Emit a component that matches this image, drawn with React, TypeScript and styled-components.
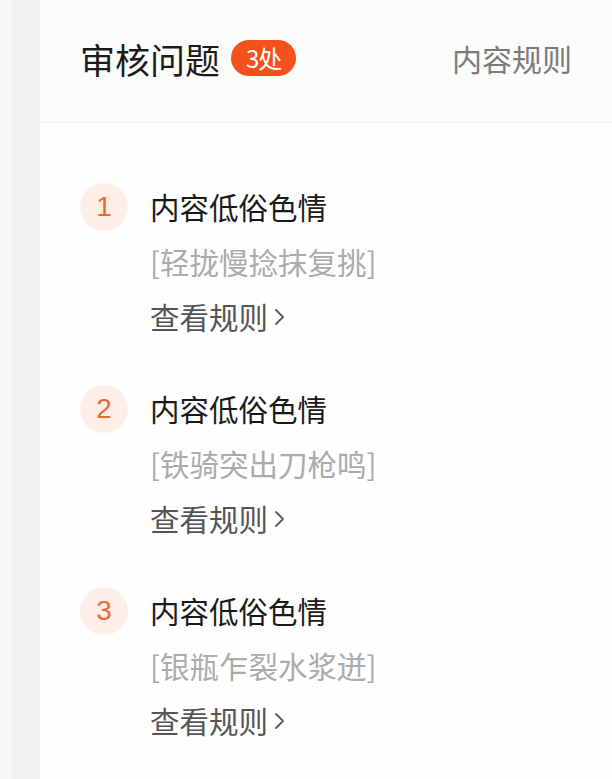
import React from "react";
import styled, { createGlobalStyle } from "styled-components";

const Global = createGlobalStyle`
  html, body { margin: 0; padding: 0; background: #f3f3f3; }
  body { font-family: "Noto Sans CJK SC", "Noto Sans", sans-serif; }
`;

const Page = styled.div`
  display: flex;
  min-height: 779px;
  width: 612px;
  background: #f3f3f3;
`;

const LeftStrip = styled.div`
  width: 40px;
  flex-shrink: 0;
  background: linear-gradient(90deg, #f7f7f7 0, #f7f7f7 12px, #f1f1f1 12px, #f2f2f2 100%);
`;

const Panel = styled.div`
  flex: 1;
  background: #fefefe;
  display: flex;
  flex-direction: column;
`;

const Header = styled.div`
  height: 123px;
  box-sizing: border-box;
  background: #fbfbfa;
  border-bottom: 1px solid #f1f1f0;
  display: flex;
  align-items: center;
  justify-content: space-between;
  padding: 0 40px 6px 40px;
`;

const TitleGroup = styled.div`
  display: flex;
  align-items: center;
  gap: 11px;
`;

const Title = styled.div`
  font-size: 35px;
  color: #1b1b1b;
  line-height: 1;
`;

const Badge = styled.div`
  height: 36px;
  padding: 0 15px;
  border-radius: 18px;
  background: #f4511c;
  color: #fff;
  font-size: 24px;
  letter-spacing: -1px;
  display: flex;
  align-items: center;
  justify-content: center;
  line-height: 1;
`;

const RulesLink = styled.div`
  font-size: 30px;
  color: #7a7a7a;
  line-height: 1;
`;

const List = styled.div`
  display: flex;
  flex-direction: column;
  gap: 37px;
  padding: 56px 0 0 40px;
`;

const Item = styled.div`
  display: flex;
  align-items: flex-start;
  gap: 22px;
`;

const NumCircle = styled.div`
  width: 48px;
  height: 48px;
  margin-top: 4px;
  border-radius: 50%;
  background: #fdefe8;
  color: #ec6a33;
  font-family: "Liberation Sans", Arial, sans-serif;
  font-size: 28px;
  display: flex;
  align-items: center;
  justify-content: center;
  flex-shrink: 0;
`;

const Lines = styled.div`
  display: flex;
  flex-direction: column;
`;

const Line = styled.div<{ $tone: "title" | "quote" | "link" }>`
  font-size: 29.5px;
  line-height: 55px;
  color: ${(p) => (p.$tone === "title" ? "#1a1a1a" : p.$tone === "quote" ? "#ababab" : "#555555")};
  display: flex;
  align-items: center;
  gap: 6px;
  white-space: nowrap;
`;

const Chevron = () => (
  <svg width="11" height="18" viewBox="0 0 11 18" fill="none">
    <path d="M2 2 L9 9 L2 16" stroke="#5a5a5a" strokeWidth="1.8" strokeLinecap="round" strokeLinejoin="round" />
  </svg>
);

const items = [
  { n: 1, quote: "[轻拢慢捻抹复挑]" },
  { n: 2, quote: "[铁骑突出刀枪鸣]" },
  { n: 3, quote: "[银瓶乍裂水浆迸]" },
];

export default function App() {
  return (
    <>
      <Global />
      <Page>
        <LeftStrip />
        <Panel>
          <Header>
            <TitleGroup>
              <Title>审核问题</Title>
              <Badge>3处</Badge>
            </TitleGroup>
            <RulesLink>内容规则</RulesLink>
          </Header>
          <List>
            {items.map((it) => (
              <Item key={it.n}>
                <NumCircle>{it.n}</NumCircle>
                <Lines>
                  <Line $tone="title">内容低俗色情</Line>
                  <Line $tone="quote">{it.quote}</Line>
                  <Line $tone="link">
                    查看规则
                    <Chevron />
                  </Line>
                </Lines>
              </Item>
            ))}
          </List>
        </Panel>
      </Page>
    </>
  );
}
